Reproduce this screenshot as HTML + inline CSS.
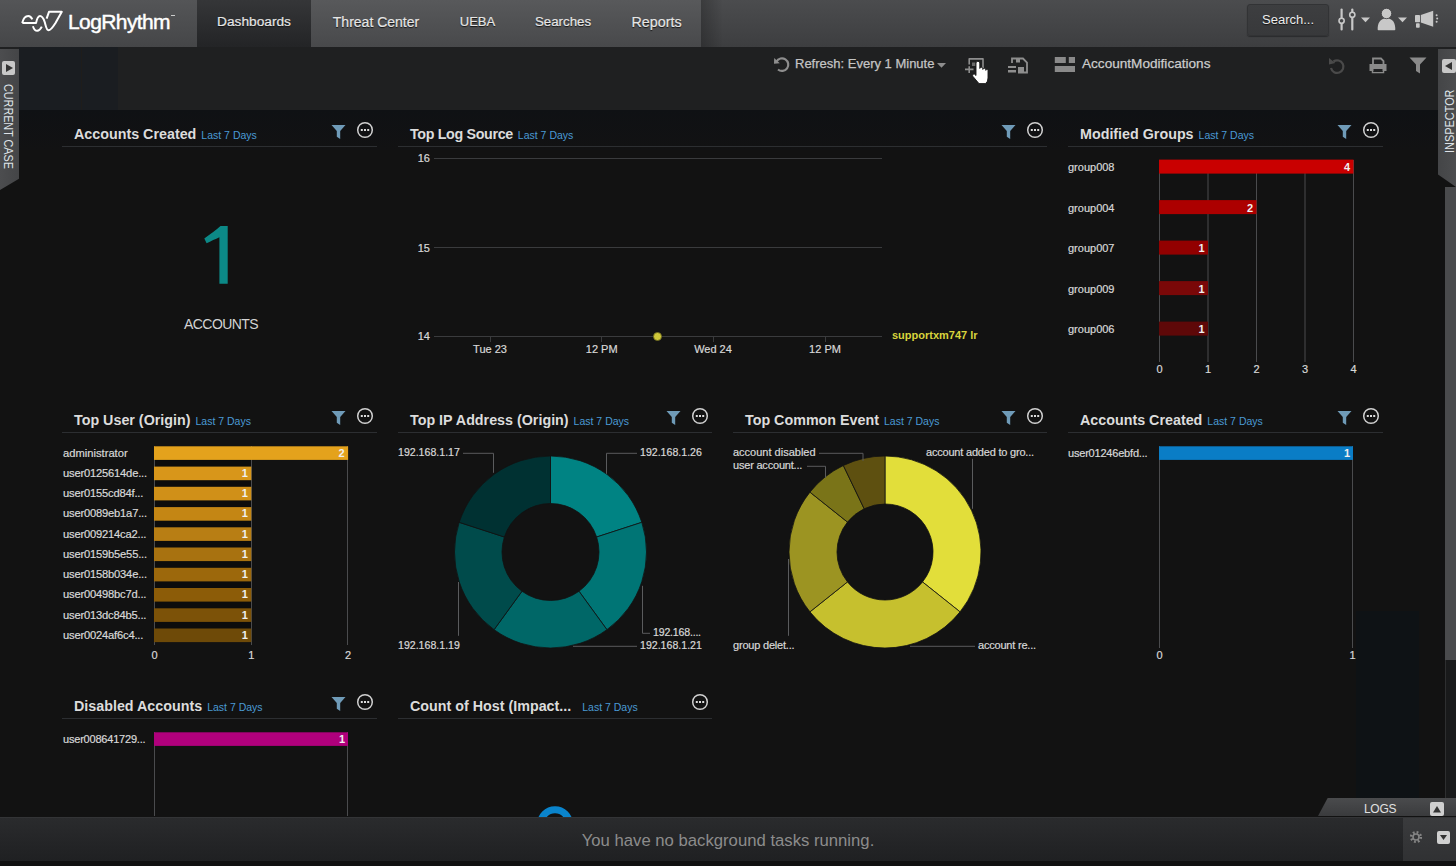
<!DOCTYPE html>
<html><head><meta charset="utf-8">
<style>
*{margin:0;padding:0;box-sizing:border-box}
html,body{width:1456px;height:866px;overflow:hidden;background:#121212;font-family:"Liberation Sans",sans-serif;color:#ddd}
.a{position:absolute}
#nav{left:0;top:0;width:1456px;height:47px;background:linear-gradient(#4b4c4e,#3d3e40)}
#logo{left:0;top:0;width:197px;height:47px;background:linear-gradient(#545557,#454648)}
.tab{top:0;height:47px;font-size:14px;color:#e6e6e6;line-height:44px;text-align:center;text-shadow:0 1px 1px #111;white-space:nowrap;-webkit-text-stroke:0.2px #e6e6e6}
#tabs{left:311px;top:0;width:390px;height:47px;background:linear-gradient(#58595b,#48494b)}
#dash{left:197px;top:0;width:114px;height:47px;background:linear-gradient(#353638,#232426)}
#toolbar{left:0;top:47px;width:1456px;height:63px;background:#1f2021}
#board{left:0;top:110px;width:1456px;height:706px;background:#121212}
.ttl{font-size:14.3px;font-weight:bold;color:#dcdcdc;white-space:nowrap}
.ttl i{display:none}
.ttl span{font-size:10.5px;font-weight:normal;color:#4a9ad4;margin-left:5px}
.sep{height:1px;background:#2c2e31}
.lbl{font-size:11px;color:#d8d8d8;white-space:nowrap}
#status{left:0;top:817px;width:1456px;height:44px;background:linear-gradient(#2a2b2d,#1f2022);border-top:1px solid #333436}
#below{left:0;top:861px;width:1456px;height:5px;background:#101011}
.tb{font-size:13px;color:#c4c4c4;white-space:nowrap;-webkit-text-stroke:0.25px #c4c4c4}
svg{position:absolute;overflow:visible}
.z{z-index:5}
</style></head><body>
<div id="nav" class="a"></div>
<div id="logo" class="a"></div>
<svg style="left:0;top:0" width="80" height="47">
  <path d="M22.2 23.1 C23.5 17.5 26 16 28.2 16 C30 16 31.5 17.5 32.3 19.4 M22.2 23.1 L36 23.1 C37 18.5 38.2 16.1 40 16.1 C42.2 16.1 43.5 18.5 44.7 22 C45.8 26 46.5 30.3 48.5 30.3 C51 30.3 53 27 55.5 23 L61.8 11.8 L49 11.8 L46.6 18.6 M32.9 26.2 C34 29.5 35.5 30.8 37.2 30.8 C39.2 30.8 40.6 29 41.8 26.6" fill="none" stroke="#fff" stroke-width="2" stroke-linejoin="round"/>
</svg>
<div class="a" style="left:68px;top:9.7px;font-size:21px;letter-spacing:-0.6px;color:#fff;-webkit-text-stroke:0.45px #fff">LogRhythm</div>
<div class="a" style="left:171px;top:15px;width:4px;height:1px;background:#ccc"></div>
<div id="dash" class="a"></div>
<div class="a" style="left:701px;top:0;width:22px;height:47px;background:linear-gradient(90deg,rgba(0,0,0,0.22),rgba(0,0,0,0))"></div>
<div id="tabs" class="a"></div>
<div class="a tab" style="left:197px;width:114px;font-size:13.7px">Dashboards</div>
<div class="a tab" style="left:311px;width:130px">Threat Center</div>
<div class="a tab" style="left:441px;width:73px;font-size:13px">UEBA</div>
<div class="a tab" style="left:514px;width:98px;font-size:13.3px">Searches</div>
<div class="a tab" style="left:612px;width:89px;font-size:14.3px">Reports</div>
<!-- search -->
<div class="a" style="left:1247px;top:4px;width:82px;height:32px;background:linear-gradient(#3d3e40,#38393b);border:1px solid #323335;border-radius:3px;box-shadow:0 1px 1px #2a2b2d"></div>
<div class="a" style="left:1262px;top:11.5px;font-size:13px;color:#ececec;text-shadow:0 1px 1px #111">Search...</div>
<svg style="left:1330px;top:0" width="126" height="47">
  <g fill="none" stroke="#c8c8c8" stroke-width="2.2" stroke-linecap="round">
    <line x1="11.6" y1="9.5" x2="11.6" y2="29.5"/><line x1="22.3" y1="9.5" x2="22.3" y2="29.5"/>
  </g>
  <circle cx="11.6" cy="20.8" r="2.6" fill="#444547" stroke="#c8c8c8" stroke-width="1.6"/>
  <circle cx="22.3" cy="14.8" r="2.6" fill="#444547" stroke="#c8c8c8" stroke-width="1.6"/>
  <path d="M31 17.5 L40 17.5 L35.5 22.3Z" fill="#c8c8c8"/>
  <path d="M47.7 29.8 Q47.7 30.2 48.5 30.2 L64.5 30.2 Q65.3 30.2 65.3 29.5 C65.5 23.5 63 18.3 56.5 18.3 C50 18.3 47.5 23.5 47.7 29.8Z" fill="#c8c8c8"/>
  <circle cx="56.5" cy="13.5" r="5.2" fill="#c8c8c8" stroke="#3a3a3c" stroke-width="0.8"/>
  <path d="M68 17.5 L77 17.5 L72.5 22.3Z" fill="#c8c8c8"/>
  <rect x="85" y="14.9" width="5" height="7.3" rx="0.8" fill="#c8c8c8"/>
  <path d="M90.8 14.9 L103.2 10.8 L103.2 26.7 L90.8 22.6Z" fill="#c8c8c8"/>
  <rect x="86" y="23.2" width="3.7" height="4.6" rx="0.8" fill="#c8c8c8"/>
  <circle cx="106.6" cy="15.2" r="1" fill="#c8c8c8"/><circle cx="107.2" cy="18.5" r="1" fill="#c8c8c8"/><circle cx="106.6" cy="21.8" r="1" fill="#c8c8c8"/>
</svg>

<div id="toolbar" class="a"></div>
<div class="a" style="left:19px;top:47px;width:99px;height:63px;background:#1a1d21"></div><div class="a" style="left:81px;top:47px;width:1px;height:63px;background:#1f1d1b"></div>
<!-- toolbar -->
<svg style="left:770px;top:52px" width="30" height="26">
  <path d="M6.5 9.5 A6.3 6.3 0 1 1 8 17.5" fill="none" stroke="#8e8e8e" stroke-width="2.2"/>
  <path d="M4.2 6 L9.8 11.2 L4 11.8Z" fill="#8e8e8e"/>
</svg>
<div class="a tb" style="left:795px;top:56px">Refresh: Every 1 Minute</div>
<svg style="left:936px;top:60px" width="12" height="8"><path d="M1 3 L10 3 L5.5 7.8Z" fill="#8e8e8e"/></svg>
<svg style="left:960px;top:54px" width="35" height="35">
  <path d="M9.2 10.5 L9.2 4.9 L23 4.9 L23 18" fill="none" stroke="#8e8e8e" stroke-width="1.6" stroke-linejoin="round"/>
  <path d="M5 15.4 L13.5 15.4 M9.2 12.3 L9.2 19" stroke="#8e8e8e" stroke-width="1.6"/>
  <rect x="12" y="8.5" width="3.5" height="3.5" fill="#6a6a6a"/>
  <path d="M16 9 Q16 7.3 17.9 7.3 Q19.8 7.3 19.8 9 L19.8 14.5 Q19.8 13.3 21.3 13.3 Q22.8 13.3 22.8 14.8 L22.8 15.5 Q22.8 14.3 24.3 14.3 Q25.8 14.3 25.8 15.8 L25.8 16.4 Q25.8 15.2 26.9 15.2 Q28 15.2 28 16.6 L28 24 Q28 28 25.5 29.6 L19 29.6 L13 22.5 Q12 21 13.2 20.2 Q14.4 19.6 16 21.5Z" fill="#fff" stroke="#1a1a1a" stroke-width="0.9"/>
</svg>
<svg style="left:1005px;top:54px" width="26" height="22">
  <path d="M7 9 L7 4.5 L18 4.5 L22 8.5 L22 18.5 L13 18.5" fill="none" stroke="#8e8e8e" stroke-width="1.8"/>
  <rect x="11" y="4.5" width="4" height="4" fill="#8e8e8e"/>
  <rect x="3" y="12" width="8" height="2" fill="#8e8e8e"/><rect x="3" y="16" width="8" height="2.5" fill="#8e8e8e"/>
  <rect x="13" y="13" width="6" height="5" fill="#8e8e8e"/>
</svg>
<svg style="left:1054px;top:56px" width="22" height="17">
  <rect x="0.8" y="1" width="11" height="6" fill="#8a8a8a"/><rect x="14.8" y="1" width="6.2" height="6" fill="#8a8a8a"/><rect x="0.8" y="10" width="20.2" height="6" fill="#8a8a8a"/>
</svg>
<div class="a tb" style="left:1082px;top:56px;font-size:13.6px;color:#d0d0d0">AccountModifications</div>
<svg style="left:1325px;top:54px" width="24" height="22">
  <path d="M8.5 7.5 A6.3 6.3 0 1 1 6 14" fill="none" stroke="#4a4a4a" stroke-width="2.2"/>
  <path d="M4 4 L10.3 9 L4 10.5Z" fill="#4a4a4a"/>
</svg>
<svg style="left:1366px;top:54px" width="24" height="22">
  <path d="M7 10 L7 4.5 L15 4.5 L17.5 7 L17.5 10" fill="none" stroke="#8a8a8a" stroke-width="1.8"/>
  <path d="M3.5 10 L20.5 10 L20.5 17 L3.5 17Z" fill="#8a8a8a"/>
  <rect x="6.5" y="14" width="11" height="4.5" fill="none" stroke="#8a8a8a" stroke-width="1.5"/>
  <rect x="7.5" y="15" width="9" height="3" fill="#202122"/>
</svg>
<svg style="left:1408px;top:54px" width="22" height="22">
  <path d="M1.5 3.5 L18.5 3.5 L12 10.5 L12 19.5 L8 17 L8 10.5Z" fill="#8a8a8a"/>
</svg>
<!-- side tabs -->
<div class="a z" style="left:0;top:49px;width:19px;height:141px;background:linear-gradient(90deg,#4c4d4f,#444547);clip-path:polygon(0 0,100% 0,100% 92%,0 100%)"></div>
<div class="a z" style="left:1.5px;top:61px;width:13.5px;height:13.5px;background:#c8c8c8;border-radius:2px"></div>
<svg class="z" style="left:1.5px;top:61px" width="14" height="14"><path d="M4 3 L11 7 L4 11Z" fill="#333"/></svg>
<div class="a z" style="left:14.5px;top:84px;font-size:13px;line-height:13px;color:#dfe3e8;transform:rotate(90deg) scaleX(0.83);transform-origin:0 0;white-space:nowrap">CURRENT CASE</div>
<div class="a z" style="left:1438px;top:49px;width:18px;height:138px;background:linear-gradient(90deg,#444547,#4c4d4f);clip-path:polygon(0 0,100% 0,100% 100%,0 91%)"></div>
<div class="a z" style="left:1442px;top:59px;width:14px;height:14px;background:#c8c8c8;border-radius:2px"></div>
<svg class="z" style="left:1442px;top:59px" width="14" height="14"><path d="M10 3 L3 7 L10 11Z" fill="#333"/></svg>
<div class="a z" style="left:1442.5px;top:153px;font-size:13px;line-height:13px;color:#dfe3e8;transform:rotate(-90deg) scaleX(0.84);transform-origin:0 0;white-space:nowrap">INSPECTOR</div>


<div id="board" class="a"></div>
<div class="a" style="left:19px;top:110px;width:1419px;height:40px;background:linear-gradient(#0f1114,#121213)"></div>
<div class="a ttl" style="left:74px;top:126px"><b style="letter-spacing:0px">Accounts Created</b><span style="margin-left:5px">Last 7 Days</span></div>
<svg style="left:331px;top:124px" width="16" height="16"><path d="M0.5 1 L14.5 1 L9.2 7 L9.2 15 L5.8 12.8 L5.8 7Z" fill="#6f9bb8"/></svg>
<svg style="left:357px;top:121.5px" width="18" height="18"><circle cx="8" cy="8" r="7.3" fill="none" stroke="#d0d0d0" stroke-width="1.5"/><rect x="3.8" y="7" width="2" height="2" fill="#ddd"/><rect x="7" y="7" width="2" height="2" fill="#ddd"/><rect x="10.2" y="7" width="2" height="2" fill="#ddd"/></svg>
<div class="a sep" style="left:62px;top:146px;width:315px"></div>
<svg style="left:0;top:0" width="1456" height="866"><path d="M219.4 283.8 L227.7 283.8 L227.7 225.9 L220.5 225.9 C216 230 211 233.5 204.3 238.5 L206.6 243.2 C211 241 215.5 239 219.4 237.2Z" fill="#0c8987"/></svg>
<div class="a" style="left:184px;top:316px;font-size:14px;letter-spacing:-0.55px;color:#d4d4d4">ACCOUNTS</div>
<div class="a ttl" style="left:410px;top:126px"><b style="letter-spacing:-0.35px">Top Log Source</b><span style="margin-left:5px">Last 7 Days</span></div>
<svg style="left:1001px;top:124px" width="16" height="16"><path d="M0.5 1 L14.5 1 L9.2 7 L9.2 15 L5.8 12.8 L5.8 7Z" fill="#6f9bb8"/></svg>
<svg style="left:1027px;top:121.5px" width="18" height="18"><circle cx="8" cy="8" r="7.3" fill="none" stroke="#d0d0d0" stroke-width="1.5"/><rect x="3.8" y="7" width="2" height="2" fill="#ddd"/><rect x="7" y="7" width="2" height="2" fill="#ddd"/><rect x="10.2" y="7" width="2" height="2" fill="#ddd"/></svg>
<div class="a sep" style="left:398px;top:146px;width:649px"></div>
<svg style="left:0;top:0" width="1456" height="866"><line x1="434" y1="158.5" x2="882" y2="158.5" stroke="#3a3b3d" stroke-width="1"/><line x1="434" y1="247.5" x2="882" y2="247.5" stroke="#3a3b3d" stroke-width="1"/><line x1="434" y1="336.5" x2="882" y2="336.5" stroke="#3a3b3d" stroke-width="1"/><line x1="490.5" y1="337" x2="490.5" y2="342" stroke="#3a3b3d" stroke-width="1"/><line x1="601.5" y1="337" x2="601.5" y2="342" stroke="#3a3b3d" stroke-width="1"/><line x1="713.5" y1="337" x2="713.5" y2="342" stroke="#3a3b3d" stroke-width="1"/><line x1="825.5" y1="337" x2="825.5" y2="342" stroke="#3a3b3d" stroke-width="1"/><circle cx="657.5" cy="336.5" r="4" fill="#cfc83a" stroke="#6d6a20" stroke-width="0.8"/></svg>
<div class="a" style="right:1026.0px;top:152.3px;font-size:11px;line-height:12.6px;color:#d8d8d8;font-weight:normal;white-space:nowrap;text-align:right;-webkit-text-stroke:0.2px #d8d8d8;">16</div>
<div class="a" style="right:1026.0px;top:241.7px;font-size:11px;line-height:12.6px;color:#d8d8d8;font-weight:normal;white-space:nowrap;text-align:right;-webkit-text-stroke:0.2px #d8d8d8;">15</div>
<div class="a" style="right:1026.0px;top:330.4px;font-size:11px;line-height:12.6px;color:#d8d8d8;font-weight:normal;white-space:nowrap;text-align:right;-webkit-text-stroke:0.2px #d8d8d8;">14</div>
<div class="a" style="left:430.0px;width:120px;top:342.7px;font-size:11px;line-height:12.6px;color:#d8d8d8;font-weight:normal;white-space:nowrap;text-align:center;-webkit-text-stroke:0.2px #d8d8d8;">Tue 23</div>
<div class="a" style="left:541.7px;width:120px;top:342.7px;font-size:11px;line-height:12.6px;color:#d8d8d8;font-weight:normal;white-space:nowrap;text-align:center;-webkit-text-stroke:0.2px #d8d8d8;">12 PM</div>
<div class="a" style="left:653.0px;width:120px;top:342.7px;font-size:11px;line-height:12.6px;color:#d8d8d8;font-weight:normal;white-space:nowrap;text-align:center;-webkit-text-stroke:0.2px #d8d8d8;">Wed 24</div>
<div class="a" style="left:765.0px;width:120px;top:342.7px;font-size:11px;line-height:12.6px;color:#d8d8d8;font-weight:normal;white-space:nowrap;text-align:center;-webkit-text-stroke:0.2px #d8d8d8;">12 PM</div>
<div class="a" style="left:892px;top:328.7px;font-size:11px;line-height:12.6px;color:#d8d43c;font-weight:bold;white-space:nowrap;">supportxm747 lr</div>
<div class="a ttl" style="left:1080px;top:126px"><b style="letter-spacing:0px">Modified Groups</b><span style="margin-left:5px">Last 7 Days</span></div>
<svg style="left:1337px;top:124px" width="16" height="16"><path d="M0.5 1 L14.5 1 L9.2 7 L9.2 15 L5.8 12.8 L5.8 7Z" fill="#6f9bb8"/></svg>
<svg style="left:1363px;top:121.5px" width="18" height="18"><circle cx="8" cy="8" r="7.3" fill="none" stroke="#d0d0d0" stroke-width="1.5"/><rect x="3.8" y="7" width="2" height="2" fill="#ddd"/><rect x="7" y="7" width="2" height="2" fill="#ddd"/><rect x="10.2" y="7" width="2" height="2" fill="#ddd"/></svg>
<div class="a sep" style="left:1068px;top:146px;width:315px"></div>
<svg style="left:0;top:0" width="1456" height="866"><line x1="1159.5" y1="160" x2="1159.5" y2="362" stroke="#4a4b4d" stroke-width="1"/><line x1="1208.0" y1="160" x2="1208.0" y2="362" stroke="#4a4b4d" stroke-width="1"/><line x1="1256.5" y1="160" x2="1256.5" y2="362" stroke="#4a4b4d" stroke-width="1"/><line x1="1305.0" y1="160" x2="1305.0" y2="362" stroke="#4a4b4d" stroke-width="1"/><line x1="1353.5" y1="160" x2="1353.5" y2="362" stroke="#4a4b4d" stroke-width="1"/><rect x="1159" y="159.6" width="194.5" height="14" fill="#c90000"/><rect x="1159" y="200.1" width="97.5" height="14" fill="#ac0000"/><rect x="1159" y="240.6" width="49.0" height="14" fill="#920000"/><rect x="1159" y="281.1" width="49.0" height="14" fill="#7a0808"/><rect x="1159" y="321.6" width="49.0" height="14" fill="#5e0808"/></svg>
<div class="a" style="left:1068px;top:161.3px;font-size:11px;line-height:12.6px;color:#d8d8d8;font-weight:normal;white-space:nowrap;-webkit-text-stroke:0.2px #d8d8d8;">group008</div>
<div class="a" style="right:106.0px;top:161.3px;font-size:11px;line-height:12.6px;color:#f0f0f0;font-weight:bold;white-space:nowrap;text-align:right;">4</div>
<div class="a" style="left:1068px;top:201.8px;font-size:11px;line-height:12.6px;color:#d8d8d8;font-weight:normal;white-space:nowrap;-webkit-text-stroke:0.2px #d8d8d8;">group004</div>
<div class="a" style="right:203.0px;top:201.8px;font-size:11px;line-height:12.6px;color:#f0f0f0;font-weight:bold;white-space:nowrap;text-align:right;">2</div>
<div class="a" style="left:1068px;top:242.3px;font-size:11px;line-height:12.6px;color:#d8d8d8;font-weight:normal;white-space:nowrap;-webkit-text-stroke:0.2px #d8d8d8;">group007</div>
<div class="a" style="right:251.5px;top:242.3px;font-size:11px;line-height:12.6px;color:#f0f0f0;font-weight:bold;white-space:nowrap;text-align:right;">1</div>
<div class="a" style="left:1068px;top:282.8px;font-size:11px;line-height:12.6px;color:#d8d8d8;font-weight:normal;white-space:nowrap;-webkit-text-stroke:0.2px #d8d8d8;">group009</div>
<div class="a" style="right:251.5px;top:282.8px;font-size:11px;line-height:12.6px;color:#f0f0f0;font-weight:bold;white-space:nowrap;text-align:right;">1</div>
<div class="a" style="left:1068px;top:323.3px;font-size:11px;line-height:12.6px;color:#d8d8d8;font-weight:normal;white-space:nowrap;-webkit-text-stroke:0.2px #d8d8d8;">group006</div>
<div class="a" style="right:251.5px;top:323.3px;font-size:11px;line-height:12.6px;color:#f0f0f0;font-weight:bold;white-space:nowrap;text-align:right;">1</div>
<div class="a" style="left:1099.5px;width:120px;top:362.7px;font-size:11px;line-height:12.6px;color:#d8d8d8;font-weight:normal;white-space:nowrap;text-align:center;-webkit-text-stroke:0.2px #d8d8d8;">0</div>
<div class="a" style="left:1148.0px;width:120px;top:362.7px;font-size:11px;line-height:12.6px;color:#d8d8d8;font-weight:normal;white-space:nowrap;text-align:center;-webkit-text-stroke:0.2px #d8d8d8;">1</div>
<div class="a" style="left:1196.5px;width:120px;top:362.7px;font-size:11px;line-height:12.6px;color:#d8d8d8;font-weight:normal;white-space:nowrap;text-align:center;-webkit-text-stroke:0.2px #d8d8d8;">2</div>
<div class="a" style="left:1245.0px;width:120px;top:362.7px;font-size:11px;line-height:12.6px;color:#d8d8d8;font-weight:normal;white-space:nowrap;text-align:center;-webkit-text-stroke:0.2px #d8d8d8;">3</div>
<div class="a" style="left:1293.5px;width:120px;top:362.7px;font-size:11px;line-height:12.6px;color:#d8d8d8;font-weight:normal;white-space:nowrap;text-align:center;-webkit-text-stroke:0.2px #d8d8d8;">4</div>
<div class="a ttl" style="left:74px;top:412px"><b style="letter-spacing:0px">Top User (Origin)</b><span style="margin-left:5px">Last 7 Days</span></div>
<svg style="left:331px;top:410px" width="16" height="16"><path d="M0.5 1 L14.5 1 L9.2 7 L9.2 15 L5.8 12.8 L5.8 7Z" fill="#6f9bb8"/></svg>
<svg style="left:357px;top:407.5px" width="18" height="18"><circle cx="8" cy="8" r="7.3" fill="none" stroke="#d0d0d0" stroke-width="1.5"/><rect x="3.8" y="7" width="2" height="2" fill="#ddd"/><rect x="7" y="7" width="2" height="2" fill="#ddd"/><rect x="10.2" y="7" width="2" height="2" fill="#ddd"/></svg>
<div class="a sep" style="left:62px;top:432px;width:315px"></div>
<svg style="left:0;top:0" width="1456" height="866"><rect x="154" y="459" width="97" height="183" fill="#0c0c0c"/><line x1="154.5" y1="446" x2="154.5" y2="645" stroke="#4a4b4d" stroke-width="1"/><line x1="251.5" y1="446" x2="251.5" y2="645" stroke="#4a4b4d" stroke-width="1"/><line x1="347.5" y1="446" x2="347.5" y2="645" stroke="#4a4b4d" stroke-width="1"/><rect x="154" y="446.3" width="194.1" height="13.6" fill="#e4a21c"/><rect x="154" y="466.6" width="97.3" height="13.6" fill="#d8961a"/><rect x="154" y="486.8" width="97.3" height="13.6" fill="#d09018"/><rect x="154" y="507.1" width="97.3" height="13.6" fill="#c48614"/><rect x="154" y="527.3" width="97.3" height="13.6" fill="#b87e14"/><rect x="154" y="547.5" width="97.3" height="13.6" fill="#a87210"/><rect x="154" y="567.8" width="97.3" height="13.6" fill="#9c680c"/><rect x="154" y="588.0" width="97.3" height="13.6" fill="#8c5c08"/><rect x="154" y="608.3" width="97.3" height="13.6" fill="#7c5208"/><rect x="154" y="628.5" width="97.3" height="13.6" fill="#6e4a08"/></svg>
<div class="a" style="left:63px;top:446.6px;font-size:11.2px;line-height:12.9px;color:#d8d8d8;font-weight:normal;white-space:nowrap;-webkit-text-stroke:0.2px #d8d8d8;">administrator</div>
<div class="a" style="right:1111.4px;top:446.7px;font-size:11px;line-height:12.6px;color:#f0f0f0;font-weight:bold;white-space:nowrap;text-align:right;">2</div>
<div class="a" style="left:63px;top:466.8px;font-size:11.2px;line-height:12.9px;color:#d8d8d8;font-weight:normal;white-space:nowrap;letter-spacing:-0.2px;-webkit-text-stroke:0.2px #d8d8d8;">user0125614de...</div>
<div class="a" style="right:1208.2px;top:466.9px;font-size:11px;line-height:12.6px;color:#f0f0f0;font-weight:bold;white-space:nowrap;text-align:right;">1</div>
<div class="a" style="left:63px;top:487.1px;font-size:11.2px;line-height:12.9px;color:#d8d8d8;font-weight:normal;white-space:nowrap;letter-spacing:-0.2px;-webkit-text-stroke:0.2px #d8d8d8;">user0155cd84f...</div>
<div class="a" style="right:1208.2px;top:487.2px;font-size:11px;line-height:12.6px;color:#f0f0f0;font-weight:bold;white-space:nowrap;text-align:right;">1</div>
<div class="a" style="left:63px;top:507.3px;font-size:11.2px;line-height:12.9px;color:#d8d8d8;font-weight:normal;white-space:nowrap;letter-spacing:-0.2px;-webkit-text-stroke:0.2px #d8d8d8;">user0089eb1a7...</div>
<div class="a" style="right:1208.2px;top:507.4px;font-size:11px;line-height:12.6px;color:#f0f0f0;font-weight:bold;white-space:nowrap;text-align:right;">1</div>
<div class="a" style="left:63px;top:527.6px;font-size:11.2px;line-height:12.9px;color:#d8d8d8;font-weight:normal;white-space:nowrap;letter-spacing:-0.2px;-webkit-text-stroke:0.2px #d8d8d8;">user009214ca2...</div>
<div class="a" style="right:1208.2px;top:527.7px;font-size:11px;line-height:12.6px;color:#f0f0f0;font-weight:bold;white-space:nowrap;text-align:right;">1</div>
<div class="a" style="left:63px;top:547.8px;font-size:11.2px;line-height:12.9px;color:#d8d8d8;font-weight:normal;white-space:nowrap;letter-spacing:-0.2px;-webkit-text-stroke:0.2px #d8d8d8;">user0159b5e55...</div>
<div class="a" style="right:1208.2px;top:547.9px;font-size:11px;line-height:12.6px;color:#f0f0f0;font-weight:bold;white-space:nowrap;text-align:right;">1</div>
<div class="a" style="left:63px;top:568.1px;font-size:11.2px;line-height:12.9px;color:#d8d8d8;font-weight:normal;white-space:nowrap;letter-spacing:-0.2px;-webkit-text-stroke:0.2px #d8d8d8;">user0158b034e...</div>
<div class="a" style="right:1208.2px;top:568.2px;font-size:11px;line-height:12.6px;color:#f0f0f0;font-weight:bold;white-space:nowrap;text-align:right;">1</div>
<div class="a" style="left:63px;top:588.3px;font-size:11.2px;line-height:12.9px;color:#d8d8d8;font-weight:normal;white-space:nowrap;letter-spacing:-0.2px;-webkit-text-stroke:0.2px #d8d8d8;">user00498bc7d...</div>
<div class="a" style="right:1208.2px;top:588.4px;font-size:11px;line-height:12.6px;color:#f0f0f0;font-weight:bold;white-space:nowrap;text-align:right;">1</div>
<div class="a" style="left:63px;top:608.6px;font-size:11.2px;line-height:12.9px;color:#d8d8d8;font-weight:normal;white-space:nowrap;letter-spacing:-0.2px;-webkit-text-stroke:0.2px #d8d8d8;">user013dc84b5...</div>
<div class="a" style="right:1208.2px;top:608.7px;font-size:11px;line-height:12.6px;color:#f0f0f0;font-weight:bold;white-space:nowrap;text-align:right;">1</div>
<div class="a" style="left:63px;top:628.8px;font-size:11.2px;line-height:12.9px;color:#d8d8d8;font-weight:normal;white-space:nowrap;letter-spacing:-0.2px;-webkit-text-stroke:0.2px #d8d8d8;">user0024af6c4...</div>
<div class="a" style="right:1208.2px;top:628.9px;font-size:11px;line-height:12.6px;color:#f0f0f0;font-weight:bold;white-space:nowrap;text-align:right;">1</div>
<div class="a" style="left:94.5px;width:120px;top:648.7px;font-size:11px;line-height:12.6px;color:#d8d8d8;font-weight:normal;white-space:nowrap;text-align:center;-webkit-text-stroke:0.2px #d8d8d8;">0</div>
<div class="a" style="left:191.3px;width:120px;top:648.7px;font-size:11px;line-height:12.6px;color:#d8d8d8;font-weight:normal;white-space:nowrap;text-align:center;-webkit-text-stroke:0.2px #d8d8d8;">1</div>
<div class="a" style="left:288.1px;width:120px;top:648.7px;font-size:11px;line-height:12.6px;color:#d8d8d8;font-weight:normal;white-space:nowrap;text-align:center;-webkit-text-stroke:0.2px #d8d8d8;">2</div>
<div class="a ttl" style="left:410px;top:412px"><b style="letter-spacing:0px">Top IP Address (Origin)</b><span style="margin-left:5px">Last 7 Days</span></div>
<svg style="left:666px;top:410px" width="16" height="16"><path d="M0.5 1 L14.5 1 L9.2 7 L9.2 15 L5.8 12.8 L5.8 7Z" fill="#6f9bb8"/></svg>
<svg style="left:692px;top:407.5px" width="18" height="18"><circle cx="8" cy="8" r="7.3" fill="none" stroke="#d0d0d0" stroke-width="1.5"/><rect x="3.8" y="7" width="2" height="2" fill="#ddd"/><rect x="7" y="7" width="2" height="2" fill="#ddd"/><rect x="10.2" y="7" width="2" height="2" fill="#ddd"/></svg>
<div class="a sep" style="left:398px;top:432px;width:314px"></div>
<svg style="left:0;top:0" width="1456" height="866"><path d="M550.50 456.00 A96 96 0 0 1 641.80 522.33 L596.63 537.01 A48.5 48.5 0 0 0 550.50 503.50Z" fill="#008383" stroke="#111" stroke-width="0.8"/><path d="M641.80 522.33 A96 96 0 0 1 606.93 629.67 L579.01 591.24 A48.5 48.5 0 0 0 596.63 537.01Z" fill="#007575" stroke="#111" stroke-width="0.8"/><path d="M606.93 629.67 A96 96 0 0 1 494.07 629.67 L521.99 591.24 A48.5 48.5 0 0 0 579.01 591.24Z" fill="#006767" stroke="#111" stroke-width="0.8"/><path d="M494.07 629.67 A96 96 0 0 1 459.20 522.33 L504.37 537.01 A48.5 48.5 0 0 0 521.99 591.24Z" fill="#004b4b" stroke="#111" stroke-width="0.8"/><path d="M459.20 522.33 A96 96 0 0 1 550.50 456.00 L550.50 503.50 A48.5 48.5 0 0 0 504.37 537.01Z" fill="#003132" stroke="#111" stroke-width="0.8"/><polyline points="463,453.3 493.5,453.3 493.5,472.8" fill="none" stroke="#5a5b5d" stroke-width="1"/><polyline points="637,453.3 606.5,453.3 606.5,473.8" fill="none" stroke="#5a5b5d" stroke-width="1"/><polyline points="650,633.3 642.5,633.3 642.5,585.8" fill="none" stroke="#5a5b5d" stroke-width="1"/><polyline points="637,646.3 573,646.3" fill="none" stroke="#5a5b5d" stroke-width="1"/><polyline points="458.5,582 458.5,635.8" fill="none" stroke="#5a5b5d" stroke-width="1"/></svg>
<div class="a" style="left:398px;top:445.9px;font-size:10.6px;line-height:12.2px;color:#d8d8d8;font-weight:normal;white-space:nowrap;-webkit-text-stroke:0.2px #d8d8d8;">192.168.1.17</div>
<div class="a" style="left:640px;top:445.9px;font-size:10.6px;line-height:12.2px;color:#d8d8d8;font-weight:normal;white-space:nowrap;-webkit-text-stroke:0.2px #d8d8d8;">192.168.1.26</div>
<div class="a" style="left:653px;top:625.9px;font-size:10.6px;line-height:12.2px;color:#d8d8d8;font-weight:normal;white-space:nowrap;letter-spacing:-0.2px;-webkit-text-stroke:0.2px #d8d8d8;">192.168....</div>
<div class="a" style="left:640px;top:638.9px;font-size:10.6px;line-height:12.2px;color:#d8d8d8;font-weight:normal;white-space:nowrap;-webkit-text-stroke:0.2px #d8d8d8;">192.168.1.21</div>
<div class="a" style="left:398px;top:638.9px;font-size:10.6px;line-height:12.2px;color:#d8d8d8;font-weight:normal;white-space:nowrap;-webkit-text-stroke:0.2px #d8d8d8;">192.168.1.19</div>
<div class="a ttl" style="left:745px;top:412px"><b style="letter-spacing:0px">Top Common Event</b><span style="margin-left:5px">Last 7 Days</span></div>
<svg style="left:1001px;top:410px" width="16" height="16"><path d="M0.5 1 L14.5 1 L9.2 7 L9.2 15 L5.8 12.8 L5.8 7Z" fill="#6f9bb8"/></svg>
<svg style="left:1027px;top:407.5px" width="18" height="18"><circle cx="8" cy="8" r="7.3" fill="none" stroke="#d0d0d0" stroke-width="1.5"/><rect x="3.8" y="7" width="2" height="2" fill="#ddd"/><rect x="7" y="7" width="2" height="2" fill="#ddd"/><rect x="10.2" y="7" width="2" height="2" fill="#ddd"/></svg>
<div class="a sep" style="left:733px;top:432px;width:314px"></div>
<svg style="left:0;top:0" width="1456" height="866"><path d="M885.00 456.00 A96 96 0 0 1 960.06 611.86 L922.53 581.93 A48 48 0 0 0 885.00 504.00Z" fill="#e2de3a" stroke="#111" stroke-width="0.8"/><path d="M960.06 611.86 A96 96 0 0 1 809.94 611.86 L847.47 581.93 A48 48 0 0 0 922.53 581.93Z" fill="#c6c02e" stroke="#111" stroke-width="0.8"/><path d="M809.94 611.86 A96 96 0 0 1 809.94 492.14 L847.47 522.07 A48 48 0 0 0 847.47 581.93Z" fill="#9c9422" stroke="#111" stroke-width="0.8"/><path d="M809.94 492.14 A96 96 0 0 1 843.35 465.51 L864.17 508.75 A48 48 0 0 0 847.47 522.07Z" fill="#7a7418" stroke="#111" stroke-width="0.8"/><path d="M843.35 465.51 A96 96 0 0 1 885.00 456.00 L885.00 504.00 A48 48 0 0 0 864.17 508.75Z" fill="#5e5010" stroke="#111" stroke-width="0.8"/><polyline points="819,453.3 863,453.3 863,460.8" fill="none" stroke="#5a5b5d" stroke-width="1"/><polyline points="807,466.3 825.5,466.3 825.5,477.8" fill="none" stroke="#5a5b5d" stroke-width="1"/><polyline points="972.5,458.8 972.5,508.8" fill="none" stroke="#5a5b5d" stroke-width="1"/><polyline points="788.5,559 788.5,635.8" fill="none" stroke="#5a5b5d" stroke-width="1"/><polyline points="975,646.3 910,646.3" fill="none" stroke="#5a5b5d" stroke-width="1"/></svg>
<div class="a" style="left:733px;top:445.7px;font-size:11px;line-height:12.6px;color:#d8d8d8;font-weight:normal;white-space:nowrap;-webkit-text-stroke:0.2px #d8d8d8;">account disabled</div>
<div class="a" style="left:733px;top:458.7px;font-size:11px;line-height:12.6px;color:#d8d8d8;font-weight:normal;white-space:nowrap;letter-spacing:-0.2px;-webkit-text-stroke:0.2px #d8d8d8;">user account...</div>
<div class="a" style="left:926px;top:445.7px;font-size:11px;line-height:12.6px;color:#d8d8d8;font-weight:normal;white-space:nowrap;letter-spacing:-0.2px;-webkit-text-stroke:0.2px #d8d8d8;">account added to gro...</div>
<div class="a" style="left:733px;top:638.7px;font-size:11px;line-height:12.6px;color:#d8d8d8;font-weight:normal;white-space:nowrap;letter-spacing:-0.2px;-webkit-text-stroke:0.2px #d8d8d8;">group delet...</div>
<div class="a" style="left:978px;top:638.7px;font-size:11px;line-height:12.6px;color:#d8d8d8;font-weight:normal;white-space:nowrap;letter-spacing:-0.2px;-webkit-text-stroke:0.2px #d8d8d8;">account re...</div>
<div class="a ttl" style="left:1080px;top:412px"><b style="letter-spacing:0px">Accounts Created</b><span style="margin-left:5px">Last 7 Days</span></div>
<svg style="left:1337px;top:410px" width="16" height="16"><path d="M0.5 1 L14.5 1 L9.2 7 L9.2 15 L5.8 12.8 L5.8 7Z" fill="#6f9bb8"/></svg>
<svg style="left:1363px;top:407.5px" width="18" height="18"><circle cx="8" cy="8" r="7.3" fill="none" stroke="#d0d0d0" stroke-width="1.5"/><rect x="3.8" y="7" width="2" height="2" fill="#ddd"/><rect x="7" y="7" width="2" height="2" fill="#ddd"/><rect x="10.2" y="7" width="2" height="2" fill="#ddd"/></svg>
<div class="a sep" style="left:1068px;top:432px;width:315px"></div>
<svg style="left:0;top:0" width="1456" height="866"><line x1="1159.5" y1="446" x2="1159.5" y2="648" stroke="#4a4b4d" stroke-width="1"/><line x1="1352.5" y1="446" x2="1352.5" y2="648" stroke="#4a4b4d" stroke-width="1"/><rect x="1159" y="446.3" width="194" height="13.6" fill="#0a7dc6"/></svg>
<div class="a" style="left:1068px;top:446.7px;font-size:11px;line-height:12.6px;color:#d8d8d8;font-weight:normal;white-space:nowrap;letter-spacing:-0.2px;-webkit-text-stroke:0.2px #d8d8d8;">user01246ebfd...</div>
<div class="a" style="right:106.0px;top:446.7px;font-size:11px;line-height:12.6px;color:#f0f0f0;font-weight:bold;white-space:nowrap;text-align:right;">1</div>
<div class="a" style="left:1099.5px;width:120px;top:648.7px;font-size:11px;line-height:12.6px;color:#d8d8d8;font-weight:normal;white-space:nowrap;text-align:center;-webkit-text-stroke:0.2px #d8d8d8;">0</div>
<div class="a" style="left:1292.5px;width:120px;top:648.7px;font-size:11px;line-height:12.6px;color:#d8d8d8;font-weight:normal;white-space:nowrap;text-align:center;-webkit-text-stroke:0.2px #d8d8d8;">1</div>
<div class="a ttl" style="left:74px;top:698px"><b style="letter-spacing:0px">Disabled Accounts</b><span style="margin-left:5px">Last 7 Days</span></div>
<svg style="left:331px;top:696px" width="16" height="16"><path d="M0.5 1 L14.5 1 L9.2 7 L9.2 15 L5.8 12.8 L5.8 7Z" fill="#6f9bb8"/></svg>
<svg style="left:357px;top:693.5px" width="18" height="18"><circle cx="8" cy="8" r="7.3" fill="none" stroke="#d0d0d0" stroke-width="1.5"/><rect x="3.8" y="7" width="2" height="2" fill="#ddd"/><rect x="7" y="7" width="2" height="2" fill="#ddd"/><rect x="10.2" y="7" width="2" height="2" fill="#ddd"/></svg>
<div class="a sep" style="left:62px;top:718px;width:315px"></div>
<svg style="left:0;top:0" width="1456" height="866"><line x1="154.5" y1="732" x2="154.5" y2="816" stroke="#4a4b4d" stroke-width="1"/><line x1="347.5" y1="732" x2="347.5" y2="816" stroke="#4a4b4d" stroke-width="1"/><rect x="154" y="732.3" width="194" height="13.6" fill="#b0007c"/></svg>
<div class="a" style="left:63px;top:732.7px;font-size:11px;line-height:12.6px;color:#d8d8d8;font-weight:normal;white-space:nowrap;letter-spacing:-0.2px;-webkit-text-stroke:0.2px #d8d8d8;">user008641729...</div>
<div class="a" style="right:1111.0px;top:732.7px;font-size:11px;line-height:12.6px;color:#f0f0f0;font-weight:bold;white-space:nowrap;text-align:right;">1</div>
<div class="a ttl" style="left:410px;top:698px"><b style="letter-spacing:0px">Count of Host (Impact...</b><span style="margin-left:11px">Last 7 Days</span></div>
<svg style="left:692px;top:693.5px" width="18" height="18"><circle cx="8" cy="8" r="7.3" fill="none" stroke="#d0d0d0" stroke-width="1.5"/><rect x="3.8" y="7" width="2" height="2" fill="#ddd"/><rect x="7" y="7" width="2" height="2" fill="#ddd"/><rect x="10.2" y="7" width="2" height="2" fill="#ddd"/></svg>
<div class="a sep" style="left:398px;top:718px;width:314px"></div>
<svg style="left:0;top:0" width="1456" height="866"><circle cx="555" cy="824.3" r="14.5" fill="none" stroke="#0a84cc" stroke-width="7"/></svg>
<div class="a" style="left:1356px;top:611px;width:63px;height:205px;background:#0e1215"></div>
<div class="a" style="left:1445px;top:187px;width:11px;height:473px;background:#4a4b4d"></div>
<div class="a" style="left:1445px;top:660px;width:11px;height:156px;background:#191a1b;border-left:1px solid #2e2f30"></div>
<div class="a" style="left:1318px;top:798px;width:138px;height:18px;background:linear-gradient(#4a4b4d,#3a3b3d);clip-path:polygon(7% 0,100% 0,100% 100%,0 100%)"></div>
<div class="a" style="left:1364px;top:801.5px;font-size:12px;letter-spacing:-0.3px;color:#e0e0e0">LOGS</div>
<div class="a" style="left:1430px;top:801.5px;width:14px;height:14px;background:#cfcfcf;border-radius:2px"></div>
<svg style="left:1430px;top:801.5px" width="14" height="14"><path d="M3 10.5 L11 10.5 L7 4Z" fill="#333"/></svg>
<div id="status" class="a"></div>
<div class="a" style="left:1403px;top:818px;width:53px;height:43px;background:linear-gradient(#3a3b3d,#303133)"></div>
<div class="a" style="left:668.0px;width:120px;top:830.9px;font-size:16.7px;line-height:19.2px;color:#8c8c8c;font-weight:normal;white-space:nowrap;text-align:center;width:400px;left:528px">You have no background tasks running.</div>
<svg style="left:1408px;top:829px" width="16" height="16"><circle cx="8" cy="8" r="4.8" fill="none" stroke="#858585" stroke-width="2.6" stroke-dasharray="1.8 1.97"/><circle cx="8" cy="8" r="3" fill="none" stroke="#858585" stroke-width="1.6"/></svg>
<div class="a" style="left:1437px;top:831px;width:12.5px;height:12.5px;background:#d0d0d0;border-radius:2px"></div>
<svg style="left:1437px;top:831px" width="13" height="13"><path d="M3 4 L10 4 L6.5 9Z" fill="#333"/></svg>
<div id="below" class="a"></div>
</body></html>
